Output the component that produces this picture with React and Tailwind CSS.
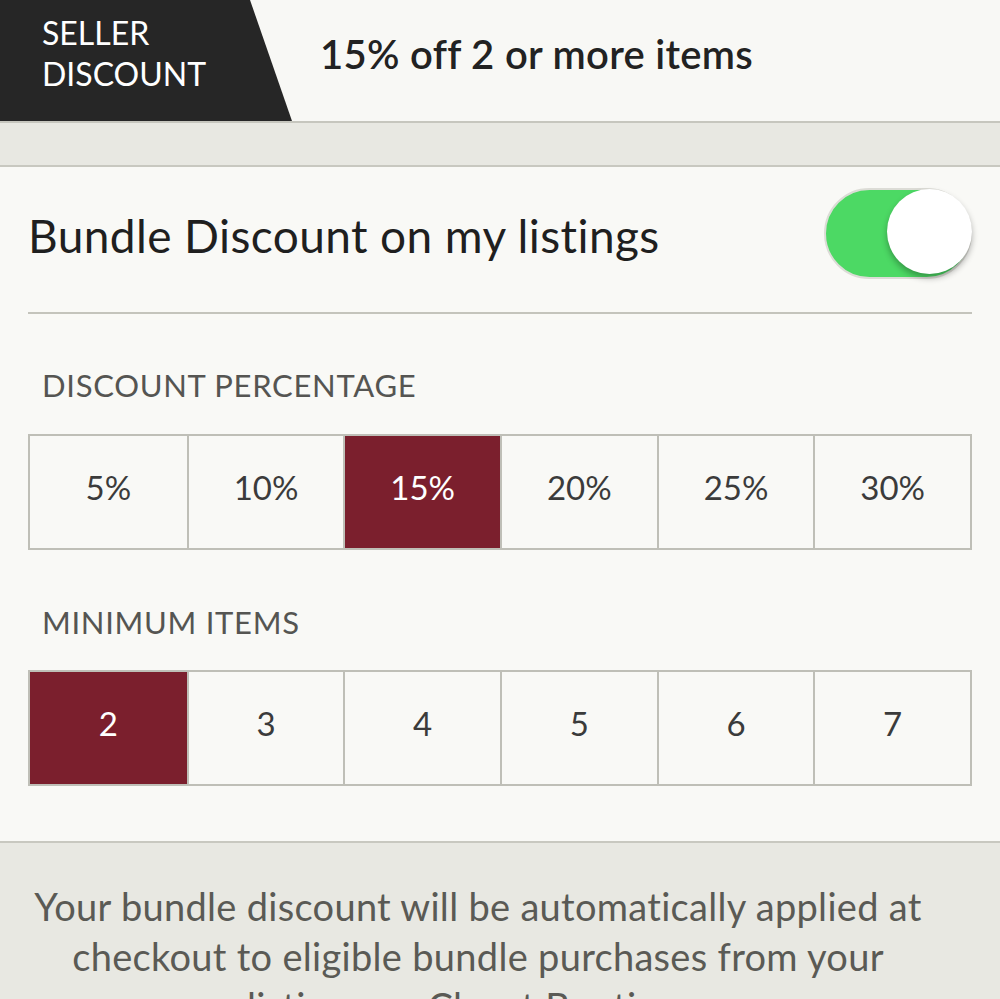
import React, { useState } from 'react';

const percents = ['5%', '10%', '15%', '20%', '25%', '30%'];
const minimums = ['2', '3', '4', '5', '6', '7'];

const OptionGrid = ({ options, selected, onSelect }) => (
  <div className="grid grid-cols-6 h-[116px] border-2 border-[#bfbfb7]">
    {options.map((opt, i) => (
      <button
        key={opt}
        type="button"
        onClick={() => onSelect(opt)}
        className={`flex items-center justify-center pb-[8px] text-[33px] ${i > 0 ? 'border-l-2 border-[#bfbfb7]' : ''} ${
          selected === opt ? 'bg-[#7b1f2d] text-white' : 'bg-[#f9f9f6] text-[#3b3b3b]'
        }`}
      >
        {opt}
      </button>
    ))}
  </div>
);

export default function App() {
  const [enabled, setEnabled] = useState(true);
  const [percent, setPercent] = useState('15%');
  const [minimum, setMinimum] = useState('2');

  return (
    <div className="w-[1000px] h-[999px] overflow-hidden bg-[#e8e8e2] font-['Lato',sans-serif]">
      {/* header */}
      <div className="flex h-[123px] bg-[#f8f8f5] border-b-2 border-[#c6c6be]">
        <div className="w-[292px] h-full bg-[#262626] [clip-path:polygon(0_0,250px_0,292px_100%,0_100%)] pl-[42px] pt-[12px] text-white text-[32px] leading-[41px]">
          <div>SELLER</div>
          <div>DISCOUNT</div>
        </div>
        <div className="flex items-center pl-[28px] pb-[14px] text-[40px] tracking-[0.3px] font-semibold text-[#222]">
          15% off 2 or more items
        </div>
      </div>

      <div className="h-[42px]" />

      {/* card */}
      <div className="bg-[#f9f9f6] border-y-2 border-[#c8c8c0] px-[28px] pb-[55px]">
        <div className="flex items-center justify-between h-[145px] pb-[8px]">
          <span className="text-[46px] tracking-[0.4px] text-[#1f1f1f]">Bundle Discount on my listings</span>
          <button
            type="button"
            onClick={() => setEnabled(!enabled)}
            className={`relative w-[148px] h-[91px] rounded-full border-2 border-[#dcdcd6] mb-[4px] ${
              enabled ? 'bg-[#4cd964]' : 'bg-[#f9f9f6]'
            }`}
          >
            <span
              className={`absolute top-[-1px] w-[85px] h-[85px] rounded-full bg-white shadow-[0_4px_6px_rgba(0,0,0,0.3)] ${
                enabled ? 'right-[-2px]' : 'left-[-2px]'
              }`}
            />
          </button>
        </div>
        <div className="h-[2px] bg-[#c4c4bc]" />

        <div className="pl-[14px] pt-[53px] pb-[31px] text-[31px] tracking-[0.7px] leading-[36px] text-[#555552]">
          DISCOUNT PERCENTAGE
        </div>
        <OptionGrid options={percents} selected={percent} onSelect={setPercent} />

        <div className="pl-[14px] pt-[54px] pb-[30px] text-[31px] tracking-[0.7px] leading-[36px] text-[#555552]">
          MINIMUM ITEMS
        </div>
        <OptionGrid options={minimums} selected={minimum} onSelect={setMinimum} />
      </div>

      {/* note */}
      <p className="pl-[10px] pr-[54px] pt-[38px] text-center text-[38px] tracking-[0.3px] leading-[50px] text-[#5a5a55]">
        Your bundle discount will be automatically applied at
        <br />
        checkout to eligible bundle purchases from your
        <br />
        listings on Closet Boutique.
      </p>
    </div>
  );
}
